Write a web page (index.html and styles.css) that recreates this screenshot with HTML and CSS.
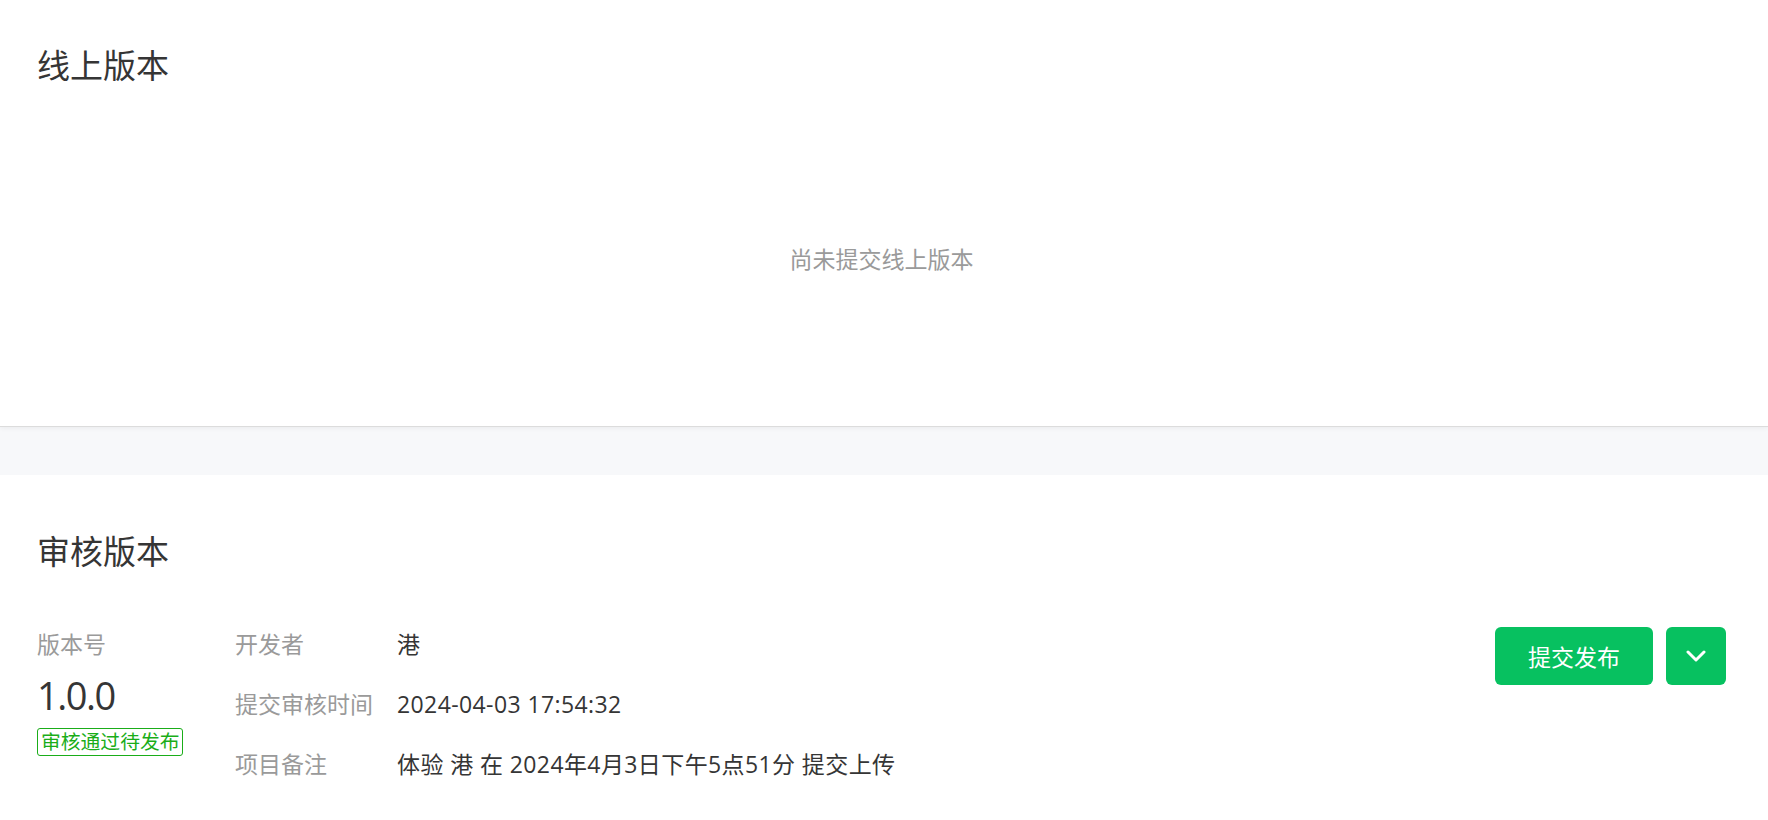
FILE: index.html
```html
<!DOCTYPE html>
<html lang="zh-CN">
<head>
<meta charset="utf-8">
<title>版本管理</title>
<link rel="stylesheet" href="styles.css">
</head>
<body>
<div class="page">
  <section class="card card-online">
    <h2 class="card-title">线上版本</h2>
    <div class="empty">尚未提交线上版本</div>
  </section>
  <section class="card card-review">
    <h2 class="card-title">审核版本</h2>
    <div class="review">
      <div class="ver">
        <div class="label">版本号</div>
        <div class="ver-num">1.0.0</div>
        <span class="tag">审核通过待发布</span>
      </div>
      <dl class="info">
        <div class="row"><dt>开发者</dt><dd>港</dd></div>
        <div class="row"><dt>提交审核时间</dt><dd>2024-04-03 17:54:32</dd></div>
        <div class="row"><dt>项目备注</dt><dd>体验 港 在 2024年4月3日下午5点51分 提交上传</dd></div>
      </dl>
      <div class="actions">
        <button class="btn btn-primary" type="button">提交发布</button>
        <button class="btn btn-icon" type="button" aria-label="更多">
          <svg width="20" height="12" viewBox="0 0 20 12"><path d="M2 2 L10 10 L18 2" fill="none" stroke="#fff" stroke-width="3" stroke-linecap="round" stroke-linejoin="round"/></svg>
        </button>
      </div>
    </div>
  </section>
</div>
</body>
</html>
```
FILE: styles.css
```css
* { box-sizing: border-box; }
html, body { margin: 0; padding: 0; }
body {
  background: #f7f8fa;
  font-family: "Open Sans", "Noto Sans CJK SC", sans-serif;
  color: #353535;
  font-size: 23px;
}
.page {
  height: 820px;
  display: flex;
  flex-direction: column;
}
.card { background: #fff; }
.card-online {
  flex: none;
  height: 426px;
  padding: 43px 42px 0 37px;
  box-shadow: 0 1px 0 #dcdcdc, 0 2px 5px rgba(0,0,0,0.06);
  position: relative;
  z-index: 1;
}
.card-review {
  flex: 1;
  margin-top: 49px;
  padding: 54px 42px 0 37px;
}
.card-title {
  margin: 0;
  font-size: 33px;
  line-height: 46px;
  font-weight: 400;
  color: #353535;
}
.empty {
  padding-top: 154px;
  line-height: 32px;
  text-align: center;
  color: #9a9a9a;
}
.review {
  display: flex;
  align-items: flex-start;
  margin-top: 52px;
}
.ver { width: 198px; display: flex; flex-direction: column; align-items: flex-start; }
.label { line-height: 34px; color: #9a9a9a; }
.ver-num {
  font-size: 38px;
  letter-spacing: -1.5px;
  line-height: 48px;
  margin-top: 10px;
  color: #353535;
}
.tag {
  margin-top: 9px;
  border: 1px solid #1aad19;
  border-radius: 3px;
  color: #1aad19;
  font-size: 19.8px;
  line-height: 26px;
  padding: 0 3px;
}
.info { flex: 1; margin: 0; }
.row { display: flex; line-height: 34px; margin-bottom: 26px; }
.row:last-child { margin-bottom: 0; }
.row dt { width: 162px; color: #9a9a9a; }
.row dd { margin: 0; color: #353535; letter-spacing: 0.4px; }
.actions { display: flex; gap: 13px; }
.btn {
  border: 0;
  border-radius: 6px;
  background: #07c160;
  color: #fff;
  height: 58px;
  font-family: inherit;
  font-size: 23px;
  padding: 0;
  display: flex;
  align-items: center;
  justify-content: center;
}
.btn-primary { width: 158px; }
.btn-icon { width: 60px; }
```
